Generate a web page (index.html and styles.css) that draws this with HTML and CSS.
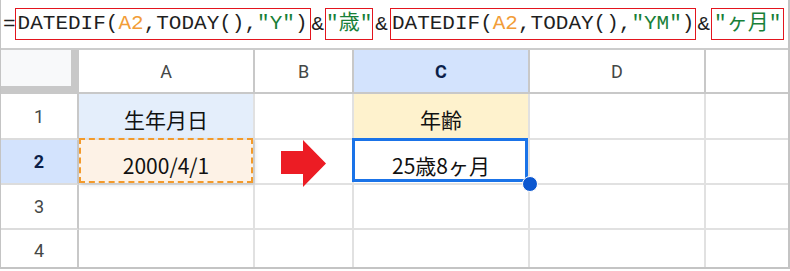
FILE: index.html
```html
<!DOCTYPE html>
<html lang="ja">
<head>
    <meta charset="UTF-8">
    <title>DATEDIF 年齢計算</title>
    <link rel="stylesheet" href="styles.css">
</head>
<body>

<div class="frame">
    <div class="fx">
        <span class="eq">=</span><span class="box b1">DATEDIF(<span class="ref">A2</span>,TODAY(),<span class="str">"Y"</span>)</span><span class="amp a1">&amp;</span><span class="box b2"><span class="str">"歳"</span></span><span class="amp a2">&amp;</span><span class="box b3">DATEDIF(<span class="ref">A2</span>,TODAY(),<span class="str">"YM"</span>)</span><span class="amp a3">&amp;</span><span class="box b4"><span class="str">"ヶ月"</span></span>
    </div>

    <div class="sheet">
        <div class="cell corner"></div>
        <div class="cell colhead">A</div>
        <div class="cell colhead">B</div>
        <div class="cell colhead active">C</div>
        <div class="cell colhead">D</div>
        <div class="cell colhead last"></div>

        <div class="cell rowhead">1</div>
        <div class="cell data label-blue">生年月日</div>
        <div class="cell data"></div>
        <div class="cell data label-yellow">年齢</div>
        <div class="cell data"></div>
        <div class="cell data last"></div>

        <div class="cell rowhead active">2</div>
        <div class="cell data copied">2000/4/1</div>
        <div class="cell data arrow-cell">
            <svg class="arrow" width="46" height="48" viewBox="0 0 46 48">
                <polygon points="0,11 22,11 22,0 45,23.5 22,47 22,34 0,34" fill="#ec1c24"/>
            </svg>
        </div>
        <div class="cell data selected">25歳8ヶ月<span class="handle"></span></div>
        <div class="cell data"></div>
        <div class="cell data last"></div>

        <div class="cell rowhead">3</div>
        <div class="cell data"></div>
        <div class="cell data"></div>
        <div class="cell data"></div>
        <div class="cell data"></div>
        <div class="cell data last"></div>

        <div class="cell rowhead bottom">4</div>
        <div class="cell data bottom"></div>
        <div class="cell data bottom"></div>
        <div class="cell data bottom"></div>
        <div class="cell data bottom"></div>
        <div class="cell data bottom last"></div>
    </div>
</div>

</body>
</html>
```

FILE: styles.css
```css
body {
    margin: 0;
    padding: 0;
    background-color: white;
}
.frame {
    width: 787px;
    border-left: 1px solid #c4c4c4;
    border-right: 2px solid #c4c4c4;
    border-bottom: 2px solid #c4c4c4;
}
.fx {
    height: 48px;
    border-bottom: 2px solid #cccccc;
    display: flex;
    align-items: center;
    padding-left: 2px;
    font-family: "Liberation Mono", "Noto Sans CJK JP", monospace;
    font-size: 21px;
    color: #1f1f1f;
    white-space: nowrap;
}
.box {
    border: 1px solid #e3151e;
    height: 30px;
    line-height: 30px;
    padding: 0 2px;
}
.b1 { margin-left: -1px; }
.b2 { padding: 0; }
.b3 { padding: 0 1px; }
.amp { padding: 0 1px; }
.a2 { padding: 0 2px; }
.ref { color: #f29d38; }
.str { color: #188038; }
.str, .b2, .b4 { font-family: "Liberation Mono", "Noto Sans CJK JP", monospace; }

.sheet {
    display: grid;
    grid-template-columns: 78px 176px 99px 176px 176px 1fr;
    grid-template-rows: 44px 46px 45px 45px 37px;
}
.cell {
    box-sizing: border-box;
    border-right: 2px solid #e1e1e1;
    border-bottom: 2px solid #e1e1e1;
    display: flex;
    align-items: center;
    justify-content: center;
    position: relative;
}
.cell.last { border-right: none; }
.cell.bottom { border-bottom: none; }
.corner {
    background-color: #f8f9fa;
    border-right: 8px solid #c8c8c8;
    border-bottom: 8px solid #c8c8c8;
}
.colhead {
    font-family: Roboto, "Liberation Sans", sans-serif;
    font-size: 18px;
    color: #444746;
    border-right-color: #c8c8c8;
    border-bottom-color: #c8c8c8;
}
.rowhead {
    font-family: Roboto, "Liberation Sans", sans-serif;
    font-size: 18px;
    color: #444746;
    border-right-color: #c8c8c8;
    border-bottom-color: #dcdcdc;
}
.rowhead.bottom { padding-top: 4px; }
.colhead.active, .rowhead.active {
    background-color: #d3e3fd;
    color: #0b1f4a;
    font-weight: bold;
}
.data {
    font-family: "Noto Sans CJK JP", sans-serif;
    font-size: 21px;
    color: #111111;
    padding-top: 6px;
}
.label-blue { background-color: #e4eefb; }
.label-yellow { background-color: #fef2cd; }
.copied { background-color: #fdf2e6; }
.copied::after {
    content: "";
    position: absolute;
    top: -2px;
    left: 0;
    right: 0;
    bottom: 0;
    border: 2px dashed #f39a2a;
    box-shadow: 2px 2px 4px rgba(0,0,0,0.12);
}
.arrow {
    position: absolute;
    left: 26px;
    top: 0;
}
.selected::after {
    content: "";
    position: absolute;
    top: -2px;
    left: -2px;
    right: 0;
    bottom: 1px;
    border: 3px solid #1a73e8;
}
.handle {
    position: absolute;
    left: 168px;
    top: 36px;
    width: 14px;
    height: 14px;
    border-radius: 50%;
    background-color: #0b57d0;
    border: 1px solid white;
    z-index: 2;
}
```
